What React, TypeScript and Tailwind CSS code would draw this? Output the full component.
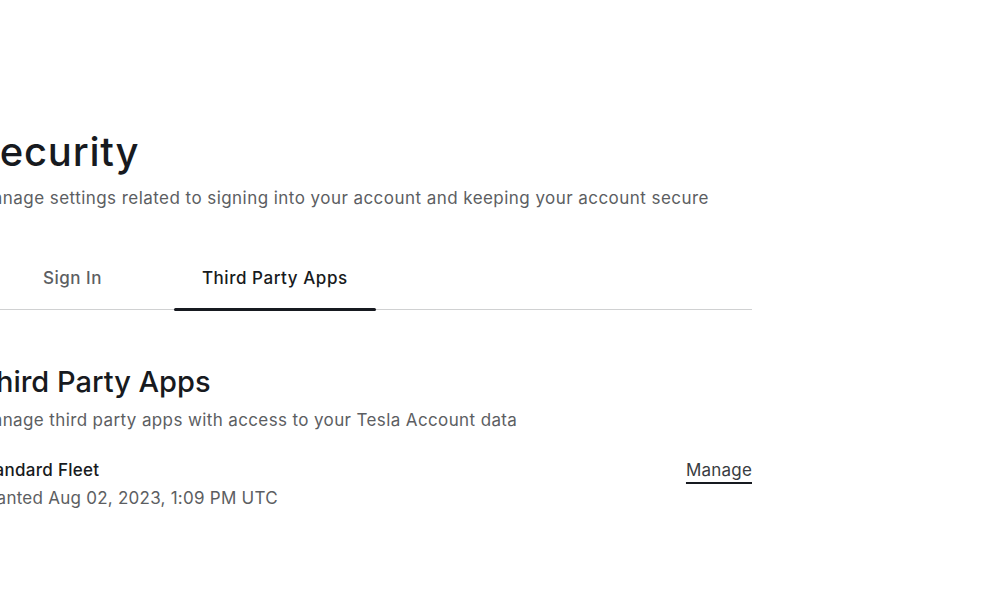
export default function App() {
  return (
    <div className="min-h-[600px] bg-white text-[#171a20]" style={{ fontFamily: 'Inter, sans-serif' }}>
      <div className="ml-[-23px] w-[775px] pt-[126px]">
        <h1 className="ml-[-4px] text-[40px] font-medium leading-[52px] tracking-[0.8px]">Security</h1>
        <p className="mt-[8px] text-[17px] leading-[24px] tracking-[0.45px] text-[#5c5e62]">
          Manage settings related to signing into your account and keeping your account secure
        </p>

        <div className="mt-[56px] flex gap-[44px] border-b border-[#d0d1d2] pl-[38px]">
          <button className="px-[28px] pb-[17px] text-[17px] font-medium tracking-[0.5px] text-[#5c5e62]">Sign In</button>
          <button className="relative px-[28px] pb-[17px] text-[17px] font-medium tracking-[0.55px] text-[#171a20]">
            Third Party Apps
            <span className="absolute bottom-[-2px] left-0 right-0 h-[3px] rounded-full bg-[#171a20]" />
          </button>
        </div>

        <h2 className="mt-[54px] text-[29px] font-medium leading-[36px]">Third Party Apps</h2>
        <p className="mt-[8px] text-[17px] leading-[24px] tracking-[0.38px] text-[#5c5e62]">
          Manage third party apps with access to your Tesla Account data
        </p>

        <div className="mt-[26px] flex items-start justify-between">
          <div>
            <div className="text-[17px] font-medium leading-[24px] tracking-[0.3px]">Standard Fleet</div>
            <div className="mt-[4px] text-[17px] leading-[24px] tracking-[0.25px] text-[#5c5e62]">
              Granted Aug 02, 2023, 1:09 PM UTC
            </div>
          </div>
          <a className="text-[17px] leading-[24px] tracking-[0.2px] text-[#393c41] underline decoration-[#171a20] decoration-[2px] underline-offset-[6px]">
            Manage
          </a>
        </div>
      </div>
    </div>
  );
}
